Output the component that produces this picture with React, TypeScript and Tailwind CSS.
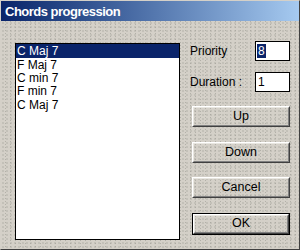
import React from "react";

const items = ["C Maj 7", "F Maj 7", "C min 7", "F min 7", "C Maj 7"];

function Btn({ label, def }: { label: string; def?: boolean }) {
  return (
    <div className={def ? "border border-black" : ""}>
      <div className="border border-t-white border-l-white border-r-[#404040] border-b-[#404040]">
        <div className={`flex items-center justify-center border border-t-[#e8e6e0] border-l-[#e8e6e0] border-r-[#808080] border-b-[#808080] ${def ? "h-[18px]" : "h-[19px]"}`}>
          <span className="text-[12.5px] leading-none text-black">{label}</span>
        </div>
      </div>
    </div>
  );
}

export default function App() {
  return (
    <div
      className="w-[300px] h-[250px] flex flex-col border border-t-[#d4d0c8] border-l-[#d4d0c8] border-r-[#404040] border-b-[#404040] bg-[#d4d0c8] bg-[radial-gradient(#a09e96_0.5px,transparent_0.8px),radial-gradient(#b2b0a8_0.5px,transparent_0.8px)] bg-[length:4px_4px,5px_3px] bg-[position:0_0,2px_1px]"
      style={{ fontFamily: '"Liberation Sans", Arial, sans-serif' }}
    >
      <div className="h-[20px] shrink-0 flex items-center pl-[4px] bg-gradient-to-r from-[#0a246a] to-[#a6caf0]">
        <span className="text-white font-bold text-[13px] tracking-[-0.5px] leading-none">
          Chords progression
        </span>
      </div>
      <div className="flex pt-[22px] pl-[14px]">
        <div className="w-[165px] h-[197px] bg-white border border-black">
          <div className="flex flex-col">
            {items.map((it, i) => (
              <div
                key={i}
                className={`h-[13.4px] flex items-center pl-[1px] text-[12px] leading-none ${i === 0 ? "bg-[#0a246a] text-white h-[14px]" : "text-black"}`}
              >
                {it}
              </div>
            ))}
          </div>
        </div>
        <div className="flex flex-col ml-[10px] w-[100px]">
          <div className="flex items-center justify-between h-[20px] mt-[-2px]">
            <span className="text-[12px] text-black">Priority</span>
            <div className="w-[35px] h-[20px] bg-white border border-black flex items-center pl-[1px]">
              <span className="bg-[#0a246a] text-white text-[12px] leading-[14px] px-[1px]">8</span>
            </div>
          </div>
          <div className="flex items-center justify-between h-[20px] mt-[11px]">
            <span className="text-[12px] text-black">Duration :</span>
            <div className="w-[35px] h-[20px] bg-white border border-black flex items-center pl-[2px]">
              <span className="text-black text-[12px] leading-none">1</span>
            </div>
          </div>
          <div className="flex flex-col gap-[14.5px] mt-[14px] ml-[2px] w-[98px]">
            <Btn label="Up" />
            <Btn label="Down" />
            <Btn label="Cancel" />
            <Btn label="OK" def />
          </div>
        </div>
      </div>
    </div>
  );
}
